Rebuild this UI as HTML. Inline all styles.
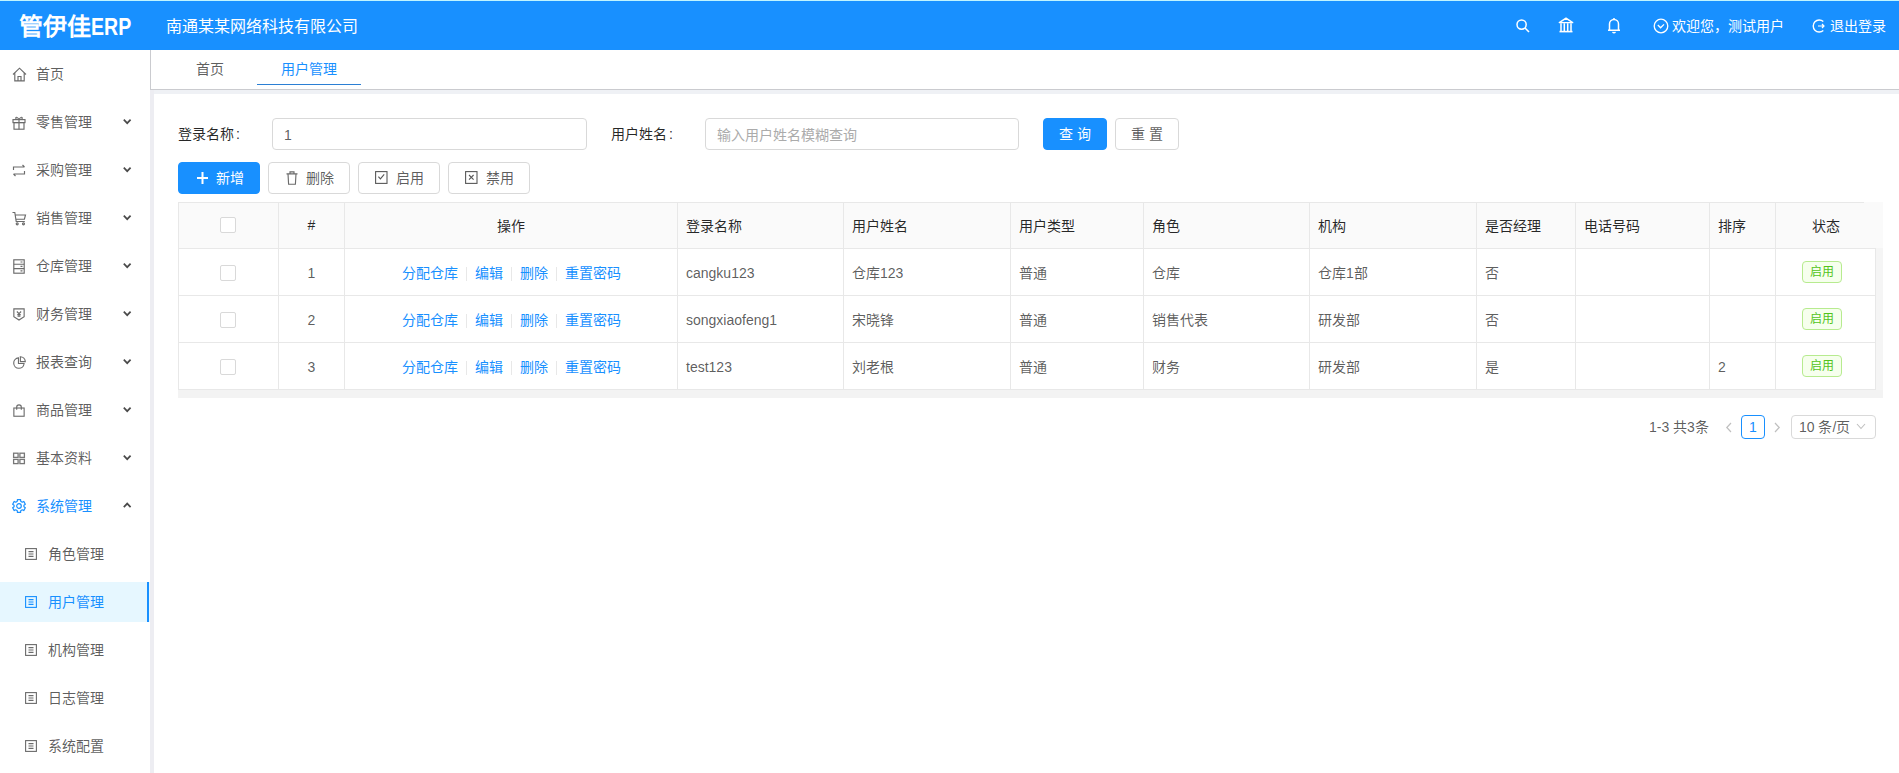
<!DOCTYPE html>
<html lang="zh-CN"><head><meta charset="utf-8">
<style>
*{box-sizing:border-box;margin:0;padding:0}
html,body{width:1899px;height:773px;overflow:hidden;background:#fff;font-family:"Liberation Sans",sans-serif;font-size:14px;color:rgba(0,0,0,.65)}
.abs{position:absolute}
#hdr{position:absolute;left:0;top:0;width:1899px;height:50px;background:#1890ff;color:#fff}
#hdr .top{position:absolute;left:0;top:0;width:100%;height:1px;background:#bff4ff}
#logo{position:absolute;left:19px;top:12px;font-size:24px;font-weight:bold;line-height:30px;white-space:nowrap}
#company{position:absolute;left:166px;top:16px;font-size:16px;line-height:22px;white-space:nowrap}
.hi{position:absolute;fill:none;stroke:#fff}
.htxt{position:absolute;top:16px;line-height:20px;font-size:14px;white-space:nowrap;color:#fff}
#side{position:absolute;left:0;top:50px;width:150px;height:723px;background:#fff}
.mi{position:absolute;left:0;width:150px;height:40px;line-height:40px;white-space:nowrap}
.mi .t{position:absolute;left:36px;top:0}
.mi svg{position:absolute}
.mi.sub .t{left:48px}
.mi.sel{background:#e6f7ff;color:#1890ff}
.mi.sel::after{content:"";position:absolute;right:1px;top:0;width:2px;height:40px;background:#1890ff}
.mi.open{color:#1890ff}
.chev{position:absolute;left:123px;top:16px}
#gutter{position:absolute;left:150px;top:90px;width:4px;height:683px;background:#ededf2}
#tabs{position:absolute;left:150px;top:50px;width:1749px;height:40px;border-left:1px solid #cacbcf;border-bottom:1px solid #cacbcf;background:#fff}
.tab{position:absolute;top:0;height:39px;line-height:38px;white-space:nowrap}
#band{position:absolute;left:151px;top:90px;width:1748px;height:4px;background:#eff1f5}
.lbl{position:absolute;top:124px;line-height:20px;color:rgba(0,0,0,.85);white-space:nowrap}
.inp{position:absolute;top:118px;height:32px;border:1px solid #d9d9d9;border-radius:4px;background:#fff;line-height:32px;padding-left:11px;white-space:nowrap}
.btn{position:absolute;height:32px;border:1px solid #d9d9d9;border-radius:4px;background:#fff;line-height:30px;text-align:center;white-space:nowrap;color:rgba(0,0,0,.65)}
.btn.pri{background:#1890ff;border-color:#1890ff;color:#fff}
.btn svg{position:absolute}
#tbl{position:absolute;left:178px;top:202px}
table{border-collapse:collapse;table-layout:fixed}
th,td{border:1px solid #e8e8e8;padding:0 8px;white-space:nowrap;overflow:hidden}
th{background:#fafafa;color:rgba(0,0,0,.85);font-weight:normal;text-align:left;height:46px;padding-bottom:2px}
td{height:47px}
.c{text-align:center}
.ln{position:relative;top:1px}
.cb{position:relative;left:-1px;display:inline-block;width:16px;height:16px;border:1px solid #d9d9d9;border-radius:2px;background:#fff;vertical-align:middle}
.lk{color:#1890ff}
.dv{display:inline-block;width:1px;height:14px;background:#e8e8e8;margin:0 8px;vertical-align:middle}
.tag{display:inline-block;height:22px;line-height:20px;padding:0 7px;font-size:12px;border:1px solid #b7eb8f;background:#f6ffed;color:#52c41a;border-radius:4px;margin-right:8px}
</style></head>
<body>
<div id="hdr"><div class="top"></div>
  <div id="logo">管伊佳<span style="display:inline-block;transform:scaleX(.85);transform-origin:0 50%;font-size:23px">ERP</span></div>
  <div id="company">南通某某网络科技有限公司</div>
  <svg class="hi" style="left:1516px;top:19px" width="14" height="14" viewBox="0 0 14 14"><circle cx="5.6" cy="5.6" r="4.6" stroke-width="1.5"/><path d="M9 9 L13 13" stroke-width="1.6"/></svg>
  <svg class="hi" style="left:1558px;top:17px" width="16" height="16" viewBox="0 0 16 16"><path d="M1.3 5.6 L8 1.2 L14.7 5.6 Z" stroke-width="1.4" stroke-linejoin="round"/><path d="M3 6.2 V14 M6.3 6.2 V14 M9.7 6.2 V14 M13 6.2 V14" stroke-width="1.5"/><path d="M1.5 14.6 H14.5" stroke-width="1.6"/></svg>
  <svg class="hi" style="left:1607px;top:17px" width="14" height="17" viewBox="0 0 14 17"><path d="M2.5 13 V7 A4.5 4.5 0 0 1 11.5 7 V13 M1 13.2 H13" stroke-width="1.5"/><path d="M7 1 V2.5" stroke-width="1.5"/><path d="M5.5 15 Q7 16.5 8.5 15" stroke-width="1.4"/></svg>
  <svg class="hi" style="left:1653px;top:18px" width="16" height="16" viewBox="0 0 16 16"><circle cx="8" cy="8" r="6.8" stroke-width="1.3"/><path d="M4.8 7 L7.6 9.8 L11 6.4" stroke-width="1.3"/></svg>
  <div class="htxt" style="left:1672px">欢迎您，测试用户</div>
  <svg class="hi" style="left:1811px;top:18px" width="16" height="16" viewBox="0 0 16 16"><path d="M12.3 3.6 A6 6 0 1 0 12.3 12.4" stroke-width="1.4"/><path d="M7 8 H13 M11 6 L13 8 L11 10" stroke-width="1.2"/></svg>
  <div class="htxt" style="left:1830px">退出登录</div>
</div>
<div id="side">
<div class="mi" style="top:4px"><svg style="left:12px;top:13px" width="15" height="15" viewBox="0 0 15 15" fill="none" stroke="#6b6b6b" stroke-width="1.15"><path d="M1 7.5 L7.5 1.2 L14 7.5 M2.8 6 V13.8 H12.2 V6 M6 13.8 V9.5 H9 V13.8"/></svg><span class="t">首页</span></div>
<div class="mi" style="top:52px"><svg style="left:12px;top:13px" width="14" height="15" viewBox="0 0 14 15" fill="none" stroke="#6b6b6b" stroke-width="1.15"><rect x="1" y="4.6" width="12" height="3"/><rect x="2" y="7.6" width="10" height="6.6"/><path d="M7 4.6 V14.2 M7 4.6 C5 1 2.5 2 4.5 4.6 M7 4.6 C9 1 11.5 2 9.5 4.6"/></svg><span class="t">零售管理</span><svg class="chev" width="9" height="7" viewBox="0 0 9 7" fill="none" stroke="#4a4a4a" stroke-width="1.7"><path d="M0.8 1.6 L4.2 5.2 L7.6 1.6"/></svg></div>
<div class="mi" style="top:100px"><svg style="left:12px;top:14px" width="14" height="13" viewBox="0 0 14 13" fill="none" stroke="#6b6b6b" stroke-width="1.15"><path d="M1.5 6 V3 H12.5 M10.5 1 L12.5 3 M12.5 7 V10 H1.5 M3.5 12 L1.5 10"/></svg><span class="t">采购管理</span><svg class="chev" width="9" height="7" viewBox="0 0 9 7" fill="none" stroke="#4a4a4a" stroke-width="1.7"><path d="M0.8 1.6 L4.2 5.2 L7.6 1.6"/></svg></div>
<div class="mi" style="top:148px"><svg style="left:12px;top:13px" width="15" height="15" viewBox="0 0 15 15" fill="none" stroke="#6b6b6b" stroke-width="1.15"><path d="M0.5 1.5 H2.8 L4.2 10.5 H12.8 M3.4 4 H13.5 L12.4 8.2 H4"/><circle cx="5.2" cy="12.8" r="1"/><circle cx="11.5" cy="12.8" r="1"/></svg><span class="t">销售管理</span><svg class="chev" width="9" height="7" viewBox="0 0 9 7" fill="none" stroke="#4a4a4a" stroke-width="1.7"><path d="M0.8 1.6 L4.2 5.2 L7.6 1.6"/></svg></div>
<div class="mi" style="top:196px"><svg style="left:13px;top:13px" width="12" height="15" viewBox="0 0 12 15" fill="none" stroke="#6b6b6b" stroke-width="1.15"><rect x="0.8" y="0.8" width="10.4" height="13.4"/><path d="M0.8 5.2 H11.2 M0.8 9.6 H11.2 M7.5 3 H9.5 M7.5 7.4 H9.5 M7.5 11.8 H9.5"/></svg><span class="t">仓库管理</span><svg class="chev" width="9" height="7" viewBox="0 0 9 7" fill="none" stroke="#4a4a4a" stroke-width="1.7"><path d="M0.8 1.6 L4.2 5.2 L7.6 1.6"/></svg></div>
<div class="mi" style="top:244px"><svg style="left:13px;top:14px" width="12" height="13" viewBox="0 0 14 15" fill="none" stroke="#6b6b6b" stroke-width="1.3"><path d="M1 1 H13 V10 L7 14 L1 10 Z M4.5 4 L7 6.5 L9.5 4 M7 6.5 V10.5 M5 7.5 H9 M5 9.3 H9"/></svg><span class="t">财务管理</span><svg class="chev" width="9" height="7" viewBox="0 0 9 7" fill="none" stroke="#4a4a4a" stroke-width="1.7"><path d="M0.8 1.6 L4.2 5.2 L7.6 1.6"/></svg></div>
<div class="mi" style="top:292px"><svg style="left:13px;top:14px" width="13" height="13" viewBox="0 0 15 15" fill="none" stroke="#6b6b6b" stroke-width="1.3"><path d="M6.3 2.2 A6 6 0 1 0 12.8 8.7 H6.3 Z M8.5 0.8 A6 6 0 0 1 14.2 6.5 H8.5 Z"/></svg><span class="t">报表查询</span><svg class="chev" width="9" height="7" viewBox="0 0 9 7" fill="none" stroke="#4a4a4a" stroke-width="1.7"><path d="M0.8 1.6 L4.2 5.2 L7.6 1.6"/></svg></div>
<div class="mi" style="top:340px"><svg style="left:13px;top:14px" width="12" height="13" viewBox="0 0 14 15" fill="none" stroke="#6b6b6b" stroke-width="1.3"><rect x="1" y="4.6" width="12" height="9.6"/><path d="M4.3 6.5 V3.6 A2.7 2.7 0 0 1 9.7 3.6 V6.5"/></svg><span class="t">商品管理</span><svg class="chev" width="9" height="7" viewBox="0 0 9 7" fill="none" stroke="#4a4a4a" stroke-width="1.7"><path d="M0.8 1.6 L4.2 5.2 L7.6 1.6"/></svg></div>
<div class="mi" style="top:388px"><svg style="left:12px;top:14px" width="14" height="13" viewBox="0 0 14 13" fill="none" stroke="#777" stroke-width="1.3"><rect x="1.6" y="1.2" width="4.5" height="4.2"/><rect x="7.9" y="1.2" width="4.5" height="4.2"/><rect x="1.6" y="7.4" width="4.5" height="4.2"/><rect x="7.9" y="7.4" width="4.5" height="4.2"/></svg><span class="t">基本资料</span><svg class="chev" width="9" height="7" viewBox="0 0 9 7" fill="none" stroke="#4a4a4a" stroke-width="1.7"><path d="M0.8 1.6 L4.2 5.2 L7.6 1.6"/></svg></div>
<div class="mi open" style="top:436px"><svg style="left:12px;top:13px" width="14" height="14" viewBox="0 0 14 14" fill="none" stroke="#1890ff" stroke-width="1.2" stroke-linejoin="round"><path d="M5.40 0.60 L8.60 0.60 L8.71 2.30 L10.21 3.17 L11.75 2.42 L13.34 5.18 L11.92 6.13 L11.92 7.87 L13.34 8.82 L11.75 11.58 L10.21 10.83 L8.71 11.70 L8.60 13.40 L5.40 13.40 L5.29 11.70 L3.79 10.83 L2.25 11.58 L0.66 8.82 L2.08 7.87 L2.08 6.13 L0.66 5.18 L2.25 2.42 L3.79 3.17 L5.29 2.30 Z"/><circle cx="7" cy="7" r="2.3"/></svg><span class="t">系统管理</span><svg class="chev" width="9" height="7" viewBox="0 0 9 7" fill="none" stroke="#4a4a4a" stroke-width="1.7"><path d="M0.8 5.2 L4.2 1.6 L7.6 5.2"/></svg></div>
<div class="mi sub" style="top:484px"><svg style="left:25px;top:14px" width="12" height="12" viewBox="0 0 12 12" fill="none" stroke="#6b6b6b" stroke-width="1.1"><rect x="0.6" y="0.6" width="10.8" height="10.8"/><path d="M3.5 3.6 H8.5 M3.5 6 H8.5 M3.5 8.4 H8.5"/></svg><span class="t">角色管理</span></div>
<div class="mi sub sel" style="top:532px"><svg style="left:25px;top:14px" width="12" height="12" viewBox="0 0 12 12" fill="none" stroke="#1890ff" stroke-width="1.1"><rect x="0.6" y="0.6" width="10.8" height="10.8"/><path d="M3.5 3.6 H8.5 M3.5 6 H8.5 M3.5 8.4 H8.5"/></svg><span class="t">用户管理</span></div>
<div class="mi sub" style="top:580px"><svg style="left:25px;top:14px" width="12" height="12" viewBox="0 0 12 12" fill="none" stroke="#6b6b6b" stroke-width="1.1"><rect x="0.6" y="0.6" width="10.8" height="10.8"/><path d="M3.5 3.6 H8.5 M3.5 6 H8.5 M3.5 8.4 H8.5"/></svg><span class="t">机构管理</span></div>
<div class="mi sub" style="top:628px"><svg style="left:25px;top:14px" width="12" height="12" viewBox="0 0 12 12" fill="none" stroke="#6b6b6b" stroke-width="1.1"><rect x="0.6" y="0.6" width="10.8" height="10.8"/><path d="M3.5 3.6 H8.5 M3.5 6 H8.5 M3.5 8.4 H8.5"/></svg><span class="t">日志管理</span></div>
<div class="mi sub" style="top:676px"><svg style="left:25px;top:14px" width="12" height="12" viewBox="0 0 12 12" fill="none" stroke="#6b6b6b" stroke-width="1.1"><rect x="0.6" y="0.6" width="10.8" height="10.8"/><path d="M3.5 3.6 H8.5 M3.5 6 H8.5 M3.5 8.4 H8.5"/></svg><span class="t">系统配置</span></div>
</div>
<div id="tabs">
  <div class="tab" style="left:45px">首页</div>
  <div class="tab" style="left:106px;width:104px;text-align:center;color:#1890ff">用户管理</div><div class="abs" style="left:106px;top:34px;width:104px;height:1px;background:#2b7fd4"></div>
</div>
<div id="band"></div>
<div id="gutter"></div>

<div class="lbl" style="left:178px">登录名称<span style="margin-left:2px">:</span></div>
<div class="inp" style="left:272px;width:315px;color:rgba(0,0,0,.65)">1</div>
<div class="lbl" style="left:611px">用户姓名<span style="margin-left:2px">:</span></div>
<div class="inp" style="left:705px;width:314px;color:#ababab">输入用户姓名模糊查询</div>
<div class="btn pri" style="left:1043px;top:118px;width:64px;letter-spacing:4px;padding-left:4px">查询</div>
<div class="btn" style="left:1115px;top:118px;width:64px;letter-spacing:4px;padding-left:4px">重置</div>

<div class="btn pri" style="left:178px;top:162px;width:82px"><svg style="left:18px;top:9px" width="11" height="12" viewBox="0 0 11 12" stroke="#fff" stroke-width="2"><path d="M5.5 0 V12 M0 6 H11"/></svg><span style="position:absolute;left:37px;top:0">新增</span></div>
<div class="btn" style="left:268px;top:162px;width:82px"><svg style="left:17px;top:8px" width="12" height="14" viewBox="0 0 12 14" fill="none" stroke="#6b6b6b" stroke-width="1.15"><path d="M0.5 2.8 H11.5 M4 2.8 V0.8 H8 V2.8 M2 2.8 L2.6 13.2 H9.4 L10 2.8"/></svg><span style="position:absolute;left:37px;top:0">删除</span></div>
<div class="btn" style="left:358px;top:162px;width:82px"><svg style="left:16px;top:8px" width="13" height="13" viewBox="0 0 13 13" fill="none" stroke="#595959" stroke-width="1.1"><rect x="0.6" y="0.6" width="11.4" height="11.8"/><path d="M3.4 5.6 L5.4 7.8 L9.2 3.4"/></svg><span style="position:absolute;left:37px;top:0">启用</span></div>
<div class="btn" style="left:448px;top:162px;width:82px"><svg style="left:16px;top:8px" width="13" height="13" viewBox="0 0 13 13" fill="none" stroke="#595959" stroke-width="1.1"><rect x="0.6" y="0.6" width="11.4" height="11.8"/><path d="M4 4 L8.6 8.6 M8.6 4 L4 8.6"/></svg><span style="position:absolute;left:37px;top:0">禁用</span></div>

<div class="abs" style="left:1875px;top:202px;width:8px;height:195px;background:#f5f5f5"></div>
<div class="abs" style="left:178px;top:390px;width:1705px;height:8px;background:#f3f3f3"></div>
<div id="tbl"><table style="width:1698px"><colgroup><col style="width:100px"><col style="width:66px"><col style="width:333px"><col style="width:166px"><col style="width:167px"><col style="width:133px"><col style="width:166px"><col style="width:167px"><col style="width:99px"><col style="width:134px"><col style="width:66px"><col style="width:100px"></colgroup><tr><th class="c"><span class="cb"></span></th><th class="c">#</th><th class="c">操作</th><th>登录名称</th><th>用户姓名</th><th>用户类型</th><th>角色</th><th>机构</th><th>是否经理</th><th>电话号码</th><th>排序</th><th class="c">状态</th></tr><tr><td class="c"><span class="cb"></span></td><td class="c"><span class="ln">1</span></td><td class="c"><span class="lk">分配仓库</span><span class="dv"></span><span class="lk">编辑</span><span class="dv"></span><span class="lk">删除</span><span class="dv"></span><span class="lk">重置密码</span></td><td><span class="ln">cangku123</span></td><td>仓库123</td><td>普通</td><td>仓库</td><td>仓库1部</td><td>否</td><td></td><td></td><td class="c"><span class="tag">启用</span></td></tr><tr><td class="c"><span class="cb"></span></td><td class="c"><span class="ln">2</span></td><td class="c"><span class="lk">分配仓库</span><span class="dv"></span><span class="lk">编辑</span><span class="dv"></span><span class="lk">删除</span><span class="dv"></span><span class="lk">重置密码</span></td><td><span class="ln">songxiaofeng1</span></td><td>宋晓锋</td><td>普通</td><td>销售代表</td><td>研发部</td><td>否</td><td></td><td></td><td class="c"><span class="tag">启用</span></td></tr><tr><td class="c"><span class="cb"></span></td><td class="c"><span class="ln">3</span></td><td class="c"><span class="lk">分配仓库</span><span class="dv"></span><span class="lk">编辑</span><span class="dv"></span><span class="lk">删除</span><span class="dv"></span><span class="lk">重置密码</span></td><td><span class="ln">test123</span></td><td>刘老根</td><td>普通</td><td>财务</td><td>研发部</td><td>是</td><td></td><td><span class="ln">2</span></td><td class="c"><span class="tag">启用</span></td></tr></table></div>
<div class="abs" style="left:1864px;top:202px;width:19px;height:46px;background:#fafafa"></div>
<div class="abs" style="left:1649px;top:417px;line-height:20px;white-space:nowrap">1-3 共3条</div>
<svg class="abs" style="left:1725px;top:422px" width="8" height="11" viewBox="0 0 8 11" fill="none" stroke="#bfbfbf" stroke-width="1.2"><path d="M6 1 L1.8 5.5 L6 10"/></svg>
<div class="abs" style="left:1741px;top:415px;width:24px;height:24px;border:1px solid #1890ff;border-radius:4px;color:#1890ff;text-align:center;line-height:22px">1</div>
<svg class="abs" style="left:1773px;top:422px" width="8" height="11" viewBox="0 0 8 11" fill="none" stroke="#bfbfbf" stroke-width="1.2"><path d="M2 1 L6.2 5.5 L2 10"/></svg>
<div class="abs" style="left:1791px;top:415px;width:85px;height:24px;border:1px solid #d9d9d9;border-radius:4px;line-height:22px;padding-left:7px;white-space:nowrap">10 条/页</div>
<svg class="abs" style="left:1856px;top:423px" width="10" height="7" viewBox="0 0 10 7" fill="none" stroke="#bfbfbf" stroke-width="1.1"><path d="M1 1 L5 5.5 L9 1"/></svg>

</body></html>
